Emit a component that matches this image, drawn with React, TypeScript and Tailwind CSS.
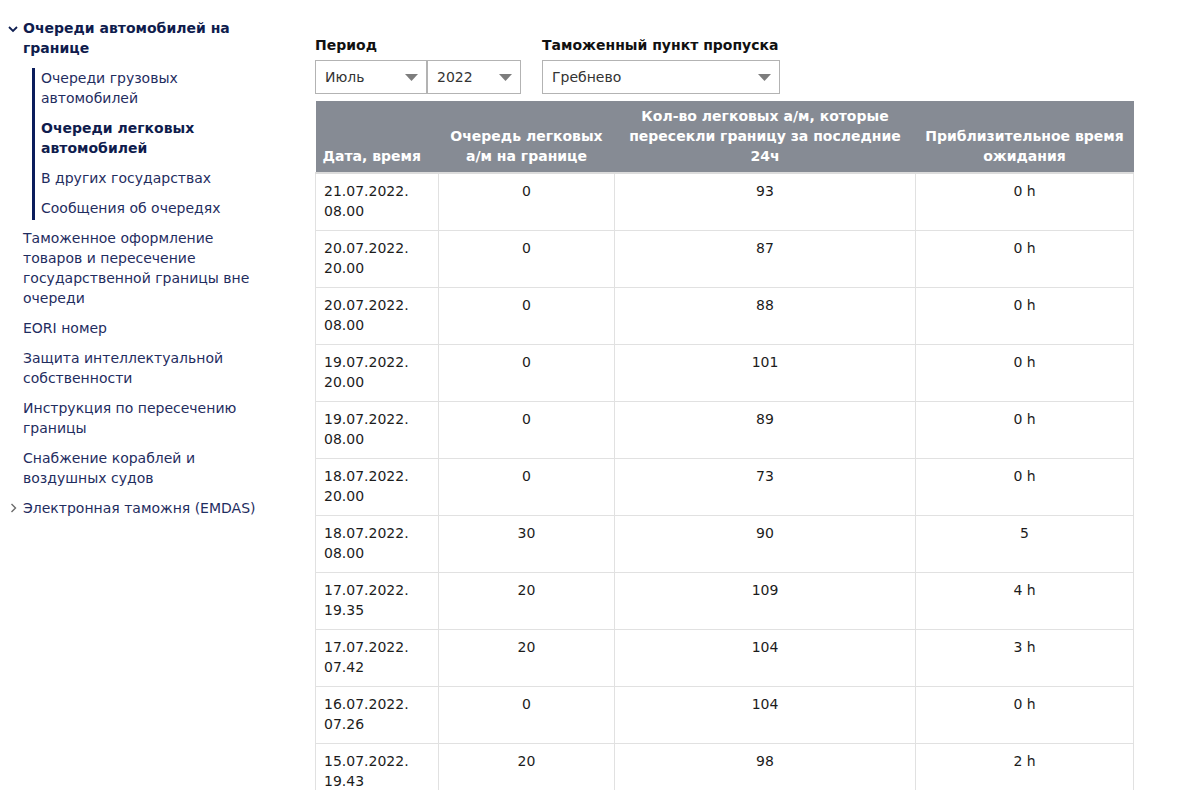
import React from 'react';

const font = { fontFamily: '"DejaVu Sans", Verdana, sans-serif' };

type Row = { date: string; time: string; queue: string; crossed: string; wait: string };

const rows: Row[] = [
  { date: '21.07.2022.', time: '08.00', queue: '0', crossed: '93', wait: '0 h' },
  { date: '20.07.2022.', time: '20.00', queue: '0', crossed: '87', wait: '0 h' },
  { date: '20.07.2022.', time: '08.00', queue: '0', crossed: '88', wait: '0 h' },
  { date: '19.07.2022.', time: '20.00', queue: '0', crossed: '101', wait: '0 h' },
  { date: '19.07.2022.', time: '08.00', queue: '0', crossed: '89', wait: '0 h' },
  { date: '18.07.2022.', time: '20.00', queue: '0', crossed: '73', wait: '0 h' },
  { date: '18.07.2022.', time: '08.00', queue: '30', crossed: '90', wait: '5' },
  { date: '17.07.2022.', time: '19.35', queue: '20', crossed: '109', wait: '4 h' },
  { date: '17.07.2022.', time: '07.42', queue: '20', crossed: '104', wait: '3 h' },
  { date: '16.07.2022.', time: '07.26', queue: '0', crossed: '104', wait: '0 h' },
  { date: '15.07.2022.', time: '19.43', queue: '20', crossed: '98', wait: '2 h' },
];

const subItems = [
  { label: 'Очереди грузовых\nавтомобилей' },
  { label: 'Очереди легковых\nавтомобилей', active: true },
  { label: 'В других государствах' },
  { label: 'Сообщения об очередях' },
];

const topItems = [
  'Таможенное оформление\nтоваров и пересечение\nгосударственной границы вне\nочереди',
  'EORI номер',
  'Защита интеллектуальной\nсобственности',
  'Инструкция по пересечению\nграницы',
  'Снабжение кораблей и\nвоздушных судов',
];

const Caret = () => (
  <svg width="13" height="7" viewBox="0 0 13 7" className="shrink-0">
    <path d="M0 0 L13 0 L6.5 7 Z" fill="#7d7d7d" />
  </svg>
);

const Select = ({ value, width }: { value: string; width: string }) => (
  <div className={`${width} h-[34px] border border-[#b3b3b3] bg-white flex items-center justify-between pl-[9px] pr-[8px] text-[14px] text-[#333]`}>
    <span>{value}</span>
    <Caret />
  </div>
);

const Lines = ({ text }: { text: string }) => (
  <>
    {text.split('\n').map((l, i) => (
      <span key={i} className="block whitespace-nowrap">{l}</span>
    ))}
  </>
);

const Sidebar = () => (
  <nav className="w-[300px] shrink-0 pl-[8px] pt-[18px] text-[14px] leading-[20px] text-[#1f2d5f]">
    <div className="flex">
      <svg width="10" height="7" viewBox="0 0 10 7" className="mt-[8px] mr-[5px] shrink-0">
        <path d="M1 1 L5 5 L9 1" stroke="#0f1f52" strokeWidth="1.8" fill="none" />
      </svg>
      <div className="font-bold text-[#0f1c4d]">
        <Lines text={'Очереди автомобилей на\nгранице'} />
      </div>
    </div>
    <div className="ml-[24px] mt-[10px] border-l-[3px] border-[#0b1d5c] pl-[6px] flex flex-col gap-[10px] pb-[2px]">
      {subItems.map((s, i) => (
        <div key={i} className={s.active ? 'font-bold text-[#0f1c4d]' : ''}>
          <Lines text={s.label} />
        </div>
      ))}
    </div>
    <div className="mt-[8px] pl-[15px] flex flex-col gap-[10px]">
      {topItems.map((t, i) => (
        <div key={i}>
          <Lines text={t} />
        </div>
      ))}
      <div className="flex items-center -ml-[13px]">
        <svg width="7" height="10" viewBox="0 0 7 10" className="mr-[6px] shrink-0">
          <path d="M1.5 1 L5.5 5 L1.5 9" stroke="#6b6b6b" strokeWidth="1.4" fill="none" />
        </svg>
        <span className="whitespace-nowrap">Электронная таможня (EMDAS)</span>
      </div>
    </div>
  </nav>
);

export default function App() {
  return (
    <div className="flex bg-white min-h-screen" style={font}>
      <Sidebar />
      <main className="pl-[15px] pt-[35px] w-[840px]">
        <div className="flex gap-[21px] text-[14px] leading-[20px]">
          <div>
            <div className="font-bold text-[#111] mb-[5px]">Период</div>
            <div className="flex">
              <Select value="Июль" width="w-[112px]" />
              <Select value="2022" width="w-[94px]" />
            </div>
          </div>
          <div>
            <div className="font-bold text-[#111] mb-[5px]">Таможенный пункт пропуска</div>
            <Select value="Гребнево" width="w-[238px]" />
          </div>
        </div>

        <table className="mt-[7px] w-[818px] border-collapse text-[14px] leading-[20px] text-[#1c1c1c] table-fixed">
          <colgroup>
            <col className="w-[123px]" />
            <col className="w-[176px]" />
            <col className="w-[301px]" />
            <col className="w-[218px]" />
          </colgroup>
          <thead>
            <tr className="bg-[#868b94] text-white font-bold align-bottom border-b-2 border-[#dcdcdc]">
              <th className="text-left pl-[7px] pr-1 pb-[6px] font-bold whitespace-nowrap">Дата, время</th>
              <th className="text-center px-1 pb-[6px] font-bold"><Lines text={'Очередь легковых\nа/м на границе'} /></th>
              <th className="text-center px-1 pb-[6px] pt-[5px] font-bold"><Lines text={'Кол-во легковых а/м, которые\nпересекли границу за последние\n24ч'} /></th>
              <th className="text-center px-1 pb-[6px] font-bold"><Lines text={'Приблизительное время\nожидания'} /></th>
            </tr>
          </thead>
          <tbody>
            {rows.map((r, i) => (
              <tr key={i} className="align-top">
                <td className="border border-[#e1e1e1] pl-[8px] pt-[7px] pb-[9px]">
                  <span className="block">{r.date}</span>
                  <span className="block">{r.time}</span>
                </td>
                <td className="border border-[#e1e1e1] text-center pt-[7px]">{r.queue}</td>
                <td className="border border-[#e1e1e1] text-center pt-[7px]">{r.crossed}</td>
                <td className="border border-[#e1e1e1] text-center pt-[7px]">{r.wait}</td>
              </tr>
            ))}
          </tbody>
        </table>
      </main>
    </div>
  );
}
